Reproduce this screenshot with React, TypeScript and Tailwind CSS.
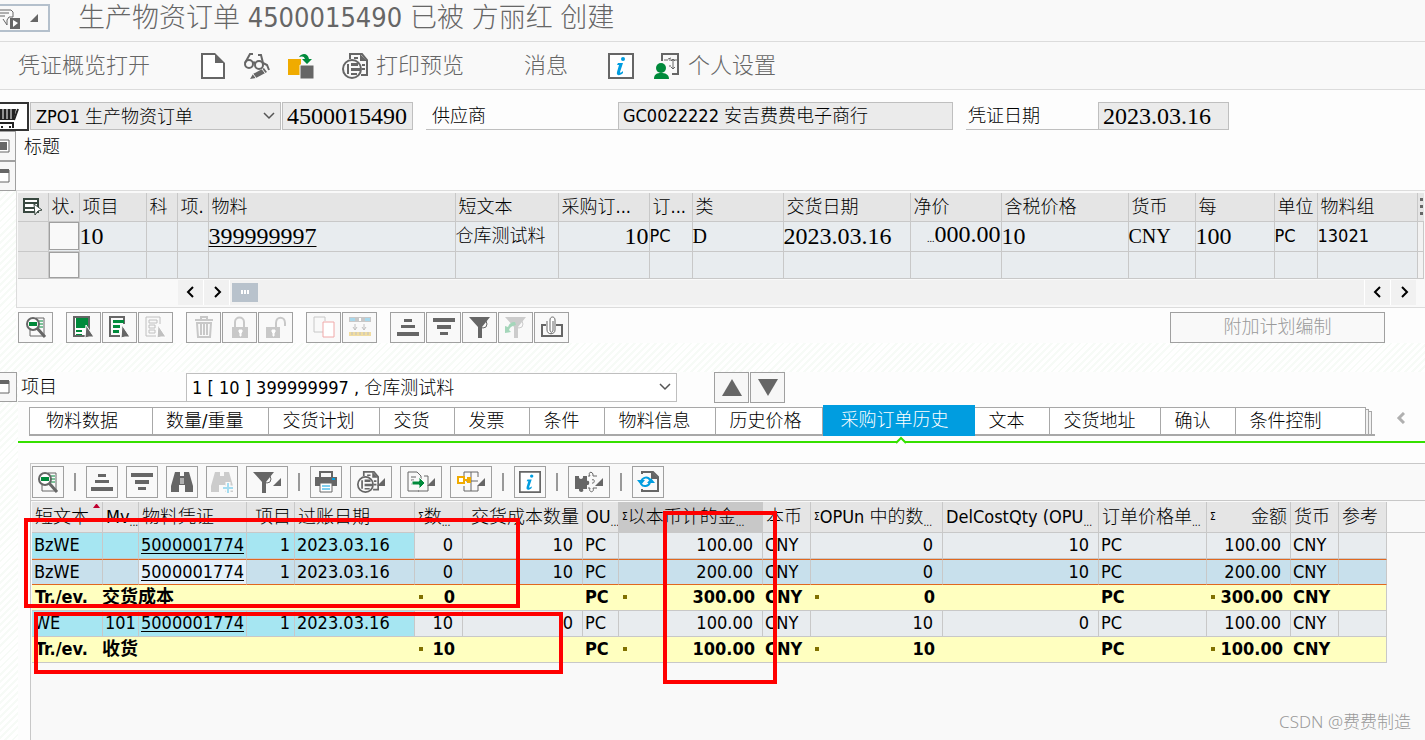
import { useState } from "react"
import type { ReactNode } from "react"
import clsx from "clsx"

const G = "#666666"

interface IconProps {
    size?: number;
    children: ReactNode;
}

const Svg = ({ size = 22, children }: IconProps) => (
    <svg width={size} height={size} viewBox={`0 0 ${size} ${size}`} fill="none" className="shrink-0" aria-hidden="true">
        {children}
    </svg>
)

/* ---------- Application toolbar icons, 26px grid ---------- */

const NewDoc = () => (
    <Svg size={26}>
        <path d="M2 1h14l8 8v16H2z" fill="#fff" />
        <path d="M15 1H2v24h22V10" stroke={G} strokeWidth="2" />
        <path d="M15 0l10 10H15z" fill={G} />
    </Svg>
)

const GlassesPencil = () => (
    <Svg size={26}>
        <g stroke={G} strokeWidth="2">
            <circle cx="5" cy="11" r="4" />
            <circle cx="15" cy="12" r="4" />
            <path d="M9 10c1-1 2-1 2 1M1 10L6 1h3M19 10L17 2h-3M19 10l4 2 2 5" />
        </g>
        <path d="M20 15l3 4-11 6-6 1 3-5z" fill={G} />
        <path d="M9 21l3 4M18 16l3 4" stroke="#f9f9f9" />
    </Svg>
)

const OtherDoc = () => (
    <Svg size={26}>
        <path d="M0 6h13v16H0z" fill="#f0ab00" />
        <path d="M12 12h14v14H12z" fill={G} stroke="#f9f9f9" />
        <path d="M11 4c4-5 9-3 10 2h3l-5 5-5-5h3c-1-3-3-3-6-2z" fill="#008a3b" />
    </Svg>
)

const PreviewShape = () => (
    <>
        <path d="M8 6V1h12l5 6v15h-6" stroke={G} strokeWidth="2" />
        <path d="M18 1v7h7z" fill={G} />
        <path d="M12 5h4M20 12h3M20 16h3" stroke={G} strokeWidth="2" />
        <circle cx="10" cy="16" r="9" fill="#f9f9f9" stroke={G} strokeWidth="2" />
        <path d="M5 11h2v10H5zM9 10h7v3H9zM9 15h10v3H9zM9 20h6v2H9z" fill={G} />
    </>
)

const InfoShape = () => (
    <>
        <path d="M1 1h24v24H1z" fill="#fff" stroke={G} strokeWidth="2" />
        <circle cx="15" cy="6" r="2" fill="#009de0" />
        <path d="M10 10h5l-3 9c0 1 1 1 3-1v2c-3 3-7 3-6-1l2-7H9z" fill="#009de0" />
    </>
)

const PersonSettings = () => (
    <Svg size={26}>
        <path d="M8 8V1h16v20h-6" stroke={G} strokeWidth="2" />
        <path d="M10 7h4M14 6l3-1M19 6v10M17 8l2-2 2 2M17 14l2 2 2-2M15 7h8M15 13h2" stroke={G} />
        <circle cx="7" cy="15" r="5" fill="#008a3b" />
        <path d="M0 26c0-5 3-6 7-6s8 1 8 6z" fill="#008a3b" />
    </Svg>
)

/* ---------- Small toolbar icons, 22px grid ---------- */

const Detail = () => (
    <Svg>
        <path d="M11 2h8v18H5v-6" stroke={G} />
        <path d="M14 5h4M14 8h4M14 11h4" stroke="#008a3b" strokeWidth="1" />
        <circle cx="8" cy="8" r="6" fill="#fff" stroke={G} strokeWidth="2" />
        <path d="M4 6h8v4H4z" fill="#008a3b" />
        <path d="M12 12l8 9" stroke={G} strokeWidth="3" />
    </Svg>
)

const cursorPath = "M13 9l8 12h-5l-4 1z"

const SelectAll = () => (
    <Svg>
        <path d="M1 1h15v19H1z" stroke={G} strokeWidth="2" fill="#fff" />
        <path d="M3 2h12v10H3zM3 14h6v2H3zM3 18h6v1H3z" fill="#008a3b" />
        <path d={cursorPath} fill={G} stroke="#fff" />
    </Svg>
)

const SelectBlock = () => (
    <Svg>
        <path d="M15 8V1H1v19h10" stroke={G} strokeWidth="2" />
        <path d="M4 4h11v3H4zM4 9h7v3H4zM4 14h6v3H4z" fill="#008a3b" />
        <path d={cursorPath} fill={G} stroke="#fff" />
    </Svg>
)

const Deselect = () => (
    <Svg>
        <path d="M15 8V1H1v19h10M4 4h8v3H4zM4 9h6v3H4zM4 14h6v3H4z" stroke="#c0c0c0" strokeWidth="1" />
        <path d={cursorPath} fill="#c0c0c0" stroke="#fff" />
    </Svg>
)

const Trash = () => (
    <Svg>
        <path d="M2 4h18M8 3V1h6v2M4 7l1 14h12l1-14zM8 8v11M11 8v11M14 8v11" stroke="#c8c8c8" strokeWidth="2" />
    </Svg>
)

const Lock = ({ open = false }: { open?: boolean }) => (
    <Svg>
        {open
            ? <path d="M11 11V7c0-7 9-7 9 0v3" stroke="#c8c8c8" strokeWidth="2" />
            : <path d="M6 11V6c0-6 9-6 9 0v5" stroke="#c8c8c8" strokeWidth="2" />}
        <path d={open ? "M1 11h14v11H1z" : "M3 11h16v11H3z"} fill="#c8c8c8" />
        <path d={open ? "M7 14h3v2l-1 1v3H8v-3l-1-1z" : "M10 14h3v2l-1 1v3h-1v-3l-1-1z"} fill="#fff" stroke="#fff" />
    </Svg>
)

const CopyIcon = () => (
    <Svg>
        <path d="M10 16H1V1h11v4" stroke="#c8c8c8" />
        <path d="M10 6h11v15H10z" stroke="#f0a8a8" strokeWidth="1" fill="#fff" />
    </Svg>
)

const Split = () => (
    <Svg>
        <path d="M0 1h22v5H0z" fill="#c8c8c8" />
        <path d="M1 2h5v3H1zM16 2h5v3h-5z" fill="#a8d8ec" />
        <path d="M10 2h2v3h-2z" fill="#fff" />
        <path d="M6 8v6M4 11l2 3 2-3M15 8v6M13 11l2 3 2-3" stroke="#c0c0c0" />
        <path d="M0 16h22v4H0z" fill="#f0dca0" />
        <path d="M3 16v3M7 16v3M11 16v3M15 16v3M19 16v3" stroke="#c0c0c0" />
    </Svg>
)

const SortAsc = () => (
    <Svg>
        <path d="M7 3h8v3H7zM4 9h14v3H4zM0 16h22v4H0z" fill={G} />
    </Svg>
)

const SortDesc = () => (
    <Svg>
        <path d="M0 2h22v4H0zM4 9h14v4H4zM7 16h8v3H7z" fill={G} />
    </Svg>
)

const Filter = ({ off = false }: { off?: boolean }) => (
    <Svg>
        <circle cx="14" cy="8" r="4" stroke={off ? "#cccccc" : G} />
        <path d="M0 1h21l-8 10v11H9V11z" fill={off ? "#cccccc" : G} />
        {off && <path d="M10 6c-4 0-6 2-7 5L0 10v7l6-1-2-2c1-3 3-4 7-5z" fill="#a4d6ba" />}
    </Svg>
)

const Attach = () => (
    <Svg>
        <path d="M5 9H1v11h20V9h-6" stroke={G} strokeWidth="2" />
        <path d="M12 5v9c0 3-3 3-3 0V4c0-4 5-4 5 0v10c0 5-8 5-8 0V5" fill="#fff" stroke={G} />
    </Svg>
)

const binoculars = "M4 1h5v4h4V1h5l4 14v6h-8v-7h-6v7H0v-6z"

const Find = () => (
    <Svg>
        <path d={binoculars} fill={G} />
        <path d="M10 7v6M12 7v6" stroke="#f9f9f9" />
    </Svg>
)

const FindNext = () => (
    <Svg>
        <path d={binoculars} fill="#cccccc" />
        <path d="M17 11v11M12 17h10" stroke="#f9f9f9" strokeWidth="5" />
        <path d="M17 12v10M12 17h10" stroke="#a4dcf0" strokeWidth="2" />
    </Svg>
)

const Printer = () => (
    <Svg>
        <path d="M5 6V1h12v5" stroke={G} strokeWidth="2" />
        <path d="M0 6h22v9H0z" fill={G} />
        <path d="M5 12h12v9H5z" fill="#fff" stroke={G} />
        <path d="M17 8h3" stroke="#009de0" strokeWidth="2" />
        <path d="M7 15h8M7 18h8" stroke="#009de0" strokeWidth="1" />
    </Svg>
)

const Export = () => (
    <Svg>
        <path d="M12 20H1V1h9l4 4v3M4 6h5M4 9h3M4 13h2M17 5h4v15H11" stroke={G} />
        <path d="M5 10h7V6l6 6-6 6v-4H5z" fill="#008a3b" stroke="#f9f9f9" />
    </Svg>
)

const Layout = () => (
    <Svg>
        <path d="M7 5V1h14v5M7 15v5h14v-5M14 1v19M9 10h12" stroke={G} />
        <path d="M1 6h6v6H1zM7 9h4" stroke="#f0ab00" strokeWidth="2" fill="#fff" />
        <path d="M10 6h4v6h-4z" fill="#f0ab00" />
    </Svg>
)

const Puzzle = () => (
    <Svg>
        <path d="M0 5h4c-1 4 5 4 4 0h4v5c3-2 3 5 0 4v4H8c2 4-5 4-4 0H0z" fill={G} />
        <path d="M13 5h2c-3-5 4-5 3 0h4M22 17h-4c2 5-5 5-3 0h-2M17 9c3-2 3 4 0 3" stroke={G} />
    </Svg>
)

const Refresh = () => (
    <Svg>
        <path d="M5 3V1h11l5 5v14H5v-2" stroke={G} strokeWidth="2" />
        <path d="M14 0l8 8h-8z" fill={G} />
        <path d="M4 11c1-5 7-6 9-2M13 11c-1 5-7 5-9 2" stroke="#009de0" strokeWidth="2" />
        <path d="M0 9h8l-4 5zM10 12l4-5 4 5z" fill="#009de0" />
    </Svg>
)

/* Corner marker of buttons that open a menu */
const MenuCorner = () => (
    <svg width="8" height="8" viewBox="0 0 8 8" className="shrink-0" aria-hidden="true">
        <path d="M8 0v8H0z" fill={G} />
    </svg>
)

const Chevron = ({ dir }: { dir: "left" | "right" | "down" }) => (
    <svg width="12" height="12" viewBox="0 0 12 12" fill="none" aria-hidden="true">
        <path
            d={dir === "left" ? "M8 1L3 6l5 5" : dir === "right" ? "M4 1l5 5-5 5" : "M1 3l5 5 5-5"}
            stroke={dir === "down" ? "#555555" : "#000000"}
            strokeWidth={dir === "down" ? 1.5 : 2}
        />
    </svg>
)

interface ToolProps {
    label: string;
    icon: ReactNode;
    menu?: boolean;
}

const itemTools: ToolProps[][] = [
    [{ label: "明细", icon: <Detail /> }],
    [
        { label: "全选", icon: <SelectAll /> },
        { label: "选择块", icon: <SelectBlock /> },
        { label: "取消选择", icon: <Deselect /> },
    ],
    [
        { label: "删除", icon: <Trash /> },
        { label: "锁定", icon: <Lock /> },
        { label: "解锁", icon: <Lock open /> },
    ],
    [
        { label: "复制", icon: <CopyIcon /> },
        { label: "拆分", icon: <Split /> },
    ],
    [
        { label: "升序", icon: <SortAsc /> },
        { label: "降序", icon: <SortDesc /> },
        { label: "过滤", icon: <Filter /> },
        { label: "删除过滤", icon: <Filter off /> },
        { label: "附件", icon: <Attach /> },
    ],
]

const historyTools: ToolProps[][] = [
    [{ label: "明细", icon: <Detail /> }],
    [
        { label: "升序", icon: <SortAsc /> },
        { label: "降序", icon: <SortDesc /> },
        { label: "查找", icon: <Find /> },
        { label: "继续查找", icon: <FindNext /> },
        { label: "过滤", icon: <Filter />, menu: true },
    ],
    [
        { label: "打印", icon: <Printer /> },
        { label: "打印预览", icon: <svg width="22" height="22" viewBox="0 0 26 26" fill="none" className="shrink-0"><PreviewShape /></svg>, menu: true },
        { label: "导出", icon: <Export />, menu: true },
        { label: "布局", icon: <Layout />, menu: true },
    ],
    [{ label: "信息", icon: <svg width="22" height="22" viewBox="0 0 26 26" fill="none" className="shrink-0"><InfoShape /></svg> }],
    [{ label: "扩展", icon: <Puzzle />, menu: true }],
    [{ label: "刷新", icon: <Refresh /> }],
]

const itemCols = [
    { title: "状.", w: "w-[31px]" },
    { title: "项目", w: "w-[67px]" },
    { title: "科", w: "w-[31px]" },
    { title: "项.", w: "w-[31px]" },
    { title: "物料", w: "w-[247px]" },
    { title: "短文本", w: "w-[103px]" },
    { title: "采购订...", w: "w-[91px]" },
    { title: "订...", w: "w-[43px]" },
    { title: "类", w: "w-[91px]" },
    { title: "交货日期", w: "w-[127px]" },
    { title: "净价", w: "w-[91px]" },
    { title: "含税价格", w: "w-[127px]" },
    { title: "货币", w: "w-[67px]" },
    { title: "每", w: "w-[79px]" },
    { title: "单位", w: "w-[43px]" },
    { title: "物料组", w: "w-[100px]" },
]

const tabs = [
    { title: "物料数据", pad: "border-l pl-4 pr-[34px]" },
    { title: "数量/重量", pad: "pl-[13px] pr-[25px]" },
    { title: "交货计划", pad: "pl-[13px] pr-[25px]" },
    { title: "交货", pad: "pl-[13px] pr-[25px]" },
    { title: "发票", pad: "pl-[13px] pr-[25px]" },
    { title: "条件", pad: "pl-[13px] pr-[25px]" },
    { title: "物料信息", pad: "pl-[13px] pr-[25px]" },
    { title: "历史价格", pad: "pl-[13px] pr-[21px]" },
    { title: "采购订单历史", pad: "pl-[17px] pr-[27px]" },
    { title: "文本", pad: "pl-[13px] pr-[25px]" },
    { title: "交货地址", pad: "pl-[13px] pr-[25px]" },
    { title: "确认", pad: "pl-[13px] pr-[25px]" },
    { title: "条件控制", pad: "pl-[13px] pr-11" },
]

const historyCols = [
    { title: "短文本", w: "w-[71px]", sorted: true },
    { title: "Mv", w: "w-9", cut: true },
    { title: "物料凭证", w: "w-[108px]" },
    { title: "项目", w: "w-12", right: true },
    { title: "过账日期", w: "w-[120px]" },
    { title: "数", w: "w-12", sum: true, cut: true },
    { title: "交货成本数量", w: "w-[120px]", right: true },
    { title: "OU", w: "w-9", cut: true },
    { title: "以本币计的金", w: "w-36", sum: true, cut: true, active: true },
    { title: "本币", w: "w-12" },
    { title: "OPUn 中的数", w: "w-[132px]", sum: true, cut: true },
    { title: "DelCostQty (OPU", w: "w-[156px]", cut: true },
    { title: "订单价格单", w: "w-[108px]", cut: true },
    { title: "金额", w: "w-[84px]", sum: true, right: true },
    { title: "货币", w: "w-12" },
    { title: "参考", w: "w-12" },
]

const numeric = [5, 6, 8, 10, 11, 13]

const historyRows = [
    { cells: ["BzWE", "", "5000001774", "1", "2023.03.16", "0", "10", "PC", "100.00", "CNY", "0", "10", "PC", "100.00", "CNY", ""] },
    { cells: ["BzWE", "", "5000001774", "1", "2023.03.16", "0", "10", "PC", "200.00", "CNY", "0", "10", "PC", "200.00", "CNY", ""], selected: true },
    { total: "交货成本", cells: ["0", "", "PC", "300.00", "CNY", "0", "", "PC", "300.00", "CNY", ""] },
    { cells: ["WE", "101", "5000001774", "1", "2023.03.16", "10", "0", "PC", "100.00", "CNY", "10", "0", "PC", "100.00", "CNY", ""] },
    { total: "收货", cells: ["10", "", "PC", "100.00", "CNY", "10", "", "PC", "100.00", "CNY", ""] },
]

const serifNum = "font-['Liberation_Serif','Noto_Sans_CJK_SC',serif] text-2xl leading-6"
const stripes = "bg-[repeating-linear-gradient(135deg,#ffffff_0px,#ffffff_3px,#f7fbf7_3px,#f7fbf7_5px)]"

const SideButton = ({ label, filled = false }: { label: string; filled?: boolean }) => (
    <button aria-label={label} className="flex h-[30px] w-full items-center border border-l-0 border-[#a0a0a0] bg-[#f7f7f7]">
        <svg width="10" height="14" viewBox="0 0 10 14" fill="none" aria-hidden="true">
            <path d="M0 1h9v12H0" stroke={G} strokeWidth="1" fill="#fff" />
            {filled ? <path d="M0 3h7v8H0z" fill={G} /> : <path d="M0 0h9v4H0z" fill={G} />}
        </svg>
    </button>
)

const TitleBar = () => (
    <header className="flex h-[42px] items-start border-b border-[#dcdcdc] bg-[#f9f9f9]">
        <button aria-label="菜单" className="mt-1 flex h-7 w-[50px] items-center gap-[10px] border-2 border-l-0 border-[#b4c0cc] bg-[#f9f9f9]">
            <svg width="20" height="22" viewBox="0 0 20 22" fill="none" aria-hidden="true">
                <path d="M0 3h11l2 2v5H9l-2 3v5l-4-6M0 6h9M0 9h5" stroke={G} strokeWidth="1" />
                <path d="M10 11h10v11H10z" fill={G} />
                <path d="M13 13l5 3-5 4z" fill="#fff" />
            </svg>
            <MenuCorner />
        </button>
        <h1 className="ml-7 text-[27px] leading-9 font-light whitespace-pre text-[#666666]">生产物资订单 4500015490 已被 方丽红 创建</h1>
    </header>
)

const AppToolbar = () => (
    <nav className="flex h-12 items-center border-b border-[#dcdcdc] bg-[#f9f9f9] pl-[18px] text-[22px] whitespace-nowrap text-[#666666]">
        <button>凭证概览打开</button>
        <button aria-label="创建" className="ml-[50px]"><NewDoc /></button>
        <button aria-label="显示/更改" className="ml-[18px]"><GlassesPencil /></button>
        <button aria-label="其他采购订单" className="ml-[18px]"><OtherDoc /></button>
        <button className="ml-7 flex items-center gap-2"><Svg size={26}><PreviewShape /></Svg>打印预览</button>
        <button className="ml-[60px]">消息</button>
        <button aria-label="帮助" className="ml-10"><Svg size={26}><InfoShape /></Svg></button>
        <button className="ml-5 flex items-center gap-2"><PersonSettings />个人设置</button>
    </nav>
)

const HeaderForm = () => (
    <div className="flex bg-[#fdfdfd] pt-3 text-lg">
        <button aria-label="购物车" className="flex h-[29px] w-[29px] items-center border-2 border-l-0 border-[#333333] bg-white">
            <svg width="20" height="22" viewBox="0 0 20 22" fill="none" aria-hidden="true">
                <path d="M0 3h16l-2 11H0" fill="#222222" />
                <path d="M3 3v10M7 3v10M11 3v10" stroke="#fff" />
                <path d="M14 14l4-11M0 17h13v5M2 20v2M10 20v2" stroke="#222222" strokeWidth="2" />
            </svg>
        </button>
        <div className="relative ml-px h-7 w-[251px]">
            <select aria-label="订单类型" className="size-full appearance-none border border-[#bfbfbf] bg-[#ebebeb] pl-[5px]">
                <option>ZPO1 生产物资订单</option>
            </select>
            <span className="pointer-events-none absolute top-2 right-1.5"><Chevron dir="down" /></span>
        </div>
        <input aria-label="订单号" readOnly defaultValue="4500015490" className={clsx("ml-px h-7 w-[131px] border border-[#bfbfbf] bg-[#ebebeb] pl-1", serifNum)} />
        <label htmlFor="vendor" className="ml-[13px] h-7 w-48 border-b border-[#bfbfbf] pl-1.5 leading-7">供应商</label>
        <input id="vendor" readOnly defaultValue="GC0022222 安吉费费电子商行" className="h-7 w-[335px] border border-[#bfbfbf] bg-[#ebebeb] pl-1" />
        <label htmlFor="docDate" className="ml-[13px] h-7 w-[132px] border-b border-[#bfbfbf] pl-0.5 leading-7">凭证日期</label>
        <input id="docDate" readOnly defaultValue="2023.03.16" className={clsx("h-7 w-[131px] border border-[#bfbfbf] bg-[#ebebeb] pl-1", serifNum)} />
    </div>
)

const ItemTable = () => (
    <div className="border-y border-l border-[#dcdcdc] bg-[#f9f9f9] px-px py-0.5">
        <table className="w-full table-fixed border-collapse text-left text-lg whitespace-nowrap">
            <thead>
                <tr className="h-7 bg-[#e5e5e5]">
                    <th className="w-[30px] border-r border-b border-[#c8c8c8] p-0">
                        <svg width="20" height="18" viewBox="0 0 20 18" fill="none" className="mx-auto" aria-label="表设置">
                            <path d="M1 1h14v13H1zM1 5h14M1 10h14" stroke="#384840" strokeWidth="2" fill="#fff" />
                            <path d="M11 6l8 6-4 1-3 4z" fill="#fff" stroke="#384840" />
                        </svg>
                    </th>
                    {itemCols.map((col) => (
                        <th key={col.w + col.title} className={clsx("border-r border-b border-[#c8c8c8] p-0 pl-[3px] leading-6 font-light", col.w)}>{col.title}</th>
                    ))}
                    <th className="border-b border-[#c8c8c8] p-0 pl-0.5">
                        <svg width="3" height="18" viewBox="0 0 3 18" aria-label="更多列">
                            <path d="M0 0h3v3H0zM0 7h3v3H0zM0 14h3v3H0z" fill={G} />
                        </svg>
                    </th>
                </tr>
            </thead>
            <tbody className="bg-[#e8ecef] [&_td]:border-r [&_td]:border-b [&_td]:border-[#c8c8c8] [&_td]:p-0">
                <tr className="h-[29px]">
                    <td className="bg-[#e5e5e5]" />
                    <td><button aria-label="选择行 10" className="block h-7 w-full border border-[#a0a0a0] bg-[#f9f9f9]" /></td>
                    <td className={serifNum}>10</td>
                    <td />
                    <td />
                    <td className={serifNum}><a href="#material" className="underline decoration-1 underline-offset-2">399999997</a></td>
                    <td>仓库测试料</td>
                    <td className={clsx("text-right", serifNum)}>10</td>
                    <td className="leading-6">PC</td>
                    <td className="font-['Liberation_Serif',serif] text-xl leading-6">D</td>
                    <td className={serifNum}>2023.03.16</td>
                    <td className={clsx("text-right", serifNum)}><span className="text-[10px]">...</span>000.00</td>
                    <td className={serifNum}>10</td>
                    <td className="font-['Liberation_Serif',serif] text-xl leading-6">CNY</td>
                    <td className={serifNum}>100</td>
                    <td className="leading-6">PC</td>
                    <td className="leading-6">13021</td>
                    <td className="bg-[#f2f2f2]" />
                </tr>
                <tr className="h-[27px]">
                    <td className="bg-[#e5e5e5]" />
                    <td><button aria-label="选择空行" className="block h-[26px] w-full border border-[#a0a0a0] bg-[#f9f9f9]" /></td>
                    {itemCols.slice(1).map((col) => <td key={col.w + col.title} />)}
                    <td className="bg-[#f2f2f2]" />
                </tr>
            </tbody>
        </table>
        <div className="mt-px mr-2 ml-40 flex h-[25px] items-stretch bg-[#f1f1f1]">
            <button aria-label="向左" className="flex w-[26px] items-center justify-center border-r border-white"><Chevron dir="left" /></button>
            <button aria-label="向右" className="flex w-[26px] items-center justify-center border-r border-white"><Chevron dir="right" /></button>
            <div className="my-[3px] ml-0.5 flex w-[26px] items-center justify-center gap-px bg-[#b8c2cc]">
                <i className="h-1 w-0.5 bg-white" />
                <i className="h-1 w-0.5 bg-white" />
                <i className="h-1 w-0.5 bg-white" />
            </div>
            <button aria-label="向左滚动" className="ml-auto flex w-[26px] items-center justify-center border-l border-white"><Chevron dir="left" /></button>
            <button aria-label="向右滚动" className="flex w-[26px] items-center justify-center border-l border-white"><Chevron dir="right" /></button>
        </div>
    </div>
)

const ItemToolbar = () => (
    <div className="flex gap-[13px] pt-1 pl-0.5">
        {itemTools.map((group, i) => (
            <div key={i} className="flex gap-px">
                {group.map((tool) => (
                    <button key={tool.label} aria-label={tool.label} className="flex h-[31px] w-[35px] items-center justify-center border border-[#a0a0a0] bg-[#f9f9f9]">
                        {tool.icon}
                    </button>
                ))}
            </div>
        ))}
        <button disabled className="mr-10 ml-auto h-[31px] w-[215px] border border-[#a0a0a0] bg-[#f9f9f9] text-lg text-[#999999]">附加计划编制</button>
    </div>
)

const ItemPicker = () => (
    <div className="flex h-[31px] items-center text-lg">
        <label htmlFor="item" className="h-[29px] w-[168px] border-b border-[#bfbfbf] pl-[3px] leading-7">项目</label>
        <div className="relative h-[29px] w-[491px]">
            <select id="item" className="size-full appearance-none border border-[#bfbfbf] bg-white pl-[5px]">
                <option>1 [ 10 ] 399999997 , 仓库测试料</option>
            </select>
            <span className="pointer-events-none absolute top-2 right-1.5"><Chevron dir="down" /></span>
        </div>
        <button aria-label="上一项" className="ml-[37px] flex h-[31px] w-[35px] items-center justify-center border border-[#a0a0a0] bg-[#f7f7f7]">
            <svg width="20" height="17" viewBox="0 0 20 17"><path d="M10 0l10 17H0z" fill={G} /></svg>
        </button>
        <button aria-label="下一项" className="ml-px flex h-[31px] w-[35px] items-center justify-center border border-[#a0a0a0] bg-[#f7f7f7]">
            <svg width="20" height="17" viewBox="0 0 20 17"><path d="M0 0h20L10 17z" fill={G} /></svg>
        </button>
    </div>
)

const TabStrip = () => {
    const [current, setCurrent] = useState("采购订单历史");

    return (
        <div className="border-b-2 border-[#35e000] pt-0.5 pb-[5px]">
            <div role="tablist" className="flex h-[31px] items-end pl-[11px] text-lg whitespace-nowrap">
                {tabs.map((tab) => {
                    const active = tab.title === current
                    return (
                        <button
                            key={tab.title}
                            role="tab"
                            aria-selected={active}
                            onClick={() => setCurrent(tab.title)}
                            className={clsx(
                                "relative text-left leading-6",
                                tab.pad,
                                active
                                    ? "h-[31px] bg-[#009de0] text-white"
                                    : "h-[29px] border-t border-r border-b-2 border-[#a8a8a8] bg-white",
                            )}
                        >
                            {tab.title}
                            {active && (
                                <svg width="10" height="8" viewBox="0 0 10 8" fill="none" className="absolute top-full left-1/2 -ml-[3px]">
                                    <path d="M0 7l5-5 5 5" fill="#fdfdfd" stroke="#35e000" strokeWidth="2" />
                                </svg>
                            )}
                        </button>
                    )
                })}
                <i className="h-[27px] w-[3px] border-t border-r border-b-2 border-[#a8a8a8] bg-[#f2f2f2]" />
                <i className="h-[25px] w-[3px] border-t border-r border-b-2 border-[#a8a8a8] bg-[#f2f2f2]" />
                <i className="h-0.5 w-[3px] bg-[#a8a8a8]" />
                <button aria-label="更多页签" className="mr-5 ml-auto flex h-[31px] items-center pb-1">
                    <svg width="9" height="12" viewBox="0 0 9 12" fill="none"><path d="M8 1L3 6l5 5" stroke="#b0b0b0" strokeWidth="3" /></svg>
                </button>
            </div>
        </div>
    )
}

const HistoryToolbar = () => (
    <div className="flex h-[37px] items-center gap-2 border-b border-[#c8c8c8] pl-px">
        {historyTools.map((group, i) => (
            <div key={i} className="flex gap-2">
                {i > 0 && <span className="flex w-1.5 items-center justify-center"><i className="h-[18px] w-0.5 bg-[#999999]" /></span>}
                {group.map((tool) => (
                    <button
                        key={tool.label}
                        aria-label={tool.label}
                        className={clsx("flex h-8 items-center justify-center border border-[#a0a0a0] bg-[#f9f9f9]", tool.menu ? "w-[42px]" : "w-8")}
                    >
                        {tool.icon}
                        {tool.menu && <span className="-ml-0.5"><MenuCorner /></span>}
                    </button>
                ))}
            </div>
        ))}
    </div>
)

const HistoryTable = () => (
    <table className="w-full table-fixed border-separate border-spacing-0 text-left text-lg leading-6 whitespace-nowrap">
        <thead>
            <tr className="h-[31px]">
                {historyCols.map((col) => (
                    <th
                        key={col.title + col.w}
                        className={clsx(
                            "relative overflow-hidden border-r border-b border-[#c8c8c8] px-[3px] py-0 font-light",
                            col.w,
                            col.right && "text-right",
                            col.active ? "bg-[#c8c8c8]" : "bg-[#e5e5e5]",
                        )}
                    >
                        <div className={clsx("flex", col.sum && col.right ? "justify-between" : col.right && "justify-end")}>
                            {col.sum && <span className="self-center text-[10px] leading-3">Σ</span>}
                            <span>{col.title}</span>
                            {col.cut && <span className="self-end text-[10px] leading-3">...</span>}
                        </div>
                        {col.sorted && (
                            <svg width="7" height="4" viewBox="0 0 7 4" className="absolute top-0.5 right-0.5"><path d="M3 0h1l3 4H0z" fill="#c00030" /></svg>
                        )}
                    </th>
                ))}
                <th className="border-b border-[#c8c8c8]" />
            </tr>
        </thead>
        <tbody>
            {historyRows.map((row, r) => (
                <tr key={r} className={clsx("h-[26px]", row.total && "font-bold")}>
                    {row.total && (
                        <td colSpan={5} className="border-b border-[#c8c8c8] bg-[#ffffc0] p-0 pl-[3px]">
                            <div className="flex">
                                <span className="w-[67px]">Tr./ev.</span>
                                <span>{row.total}</span>
                            </div>
                        </td>
                    )}
                    {row.cells.map((cell, c) => {
                        const index = row.total ? c + 5 : c
                        const isNumber = numeric.includes(index)
                        const summed = row.total && isNumber && cell !== ""
                        return (
                            <td
                                key={index}
                                className={clsx(
                                    "p-0",
                                    row.total && index !== 15 ? "border-r-0" : "border-r border-r-[#c8c8c8]",
                                    row.selected ? "border-y border-y-[#e06820]" : "border-b border-b-[#c8c8c8]",
                                    row.total ? "bg-[#ffffc0]"
                                        : row.selected ? (index === 2 ? "bg-[#e5f1fb]" : "bg-[#c8e0ec]")
                                            : index < 5 ? "bg-[#a6e6f2]" : "bg-[#e8ecef]",
                                    isNumber ? (row.total ? "pr-2 text-right" : "pr-[9px] text-right") : index === 3 ? "pr-1 text-right" : "pl-0.5",
                                )}
                            >
                                {index === 2
                                    ? <a href="#document" className="underline decoration-1 underline-offset-2">{cell}</a>
                                    : summed
                                        ? <div className="flex items-center justify-between pl-1"><i className="size-1 bg-[#807000]" />{cell}</div>
                                        : cell}
                            </td>
                        )
                    })}
                </tr>
            ))}
        </tbody>
    </table>
)

/* Red frames drawn over the grid to point at the rows and the amount column */
const Marks = () => (
    <div className="pointer-events-none">
        <div className="absolute top-[17px] -left-[7px] h-[90px] w-[496px] border-4 border-[#ff0000]" />
        <div className="absolute top-[111px] left-[3px] h-[62px] w-[529px] border-4 border-[#ff0000]" />
        <div className="absolute top-[10px] left-[632px] h-[173px] w-[114px] border-4 border-[#ff0000]" />
    </div>
)

export default function App() {
    return (
        <div className="relative flex min-h-screen flex-col overflow-hidden bg-white font-['DejaVu_Sans_Condensed','Noto_Sans_CJK_SC',sans-serif] font-light text-black">
            <TitleBar />
            <AppToolbar />
            <HeaderForm />

            {/* Item overview */}
            <section className={clsx("flex", stripes)}>
                <aside className="w-4 shrink-0">
                    <SideButton label="抬头" filled />
                    <SideButton label="项目概览" />
                </aside>
                <div className="min-w-0 flex-1 bg-[#fdfdfd]">
                    <h2 className="h-[59px] pt-0.5 pl-2 text-lg font-light">标题</h2>
                    <ItemTable />
                    <ItemToolbar />
                </div>
            </section>

            <div className={clsx("h-[29px]", stripes)} />

            {/* Item detail */}
            <section className={clsx("flex flex-1", stripes)}>
                <aside className="w-[18px] shrink-0 pr-px">
                    <SideButton label="项目明细" />
                </aside>
                <div className="flex min-w-0 flex-1 flex-col bg-[#fdfdfd]">
                    <ItemPicker />
                    <TabStrip />
                    <div className="mt-5 ml-3 flex-1 border-t border-l border-[#c8c8c8] bg-[#f9f9f9]">
                        <HistoryToolbar />
                        <div className="relative pt-px pl-px">
                            <HistoryTable />
                            <Marks />
                        </div>
                    </div>
                </div>
            </section>

            <p className="absolute right-3.5 bottom-1.5 font-['Noto_Sans','Noto_Sans_CJK_SC',sans-serif] text-[17px] text-[#999999]">CSDN @费费制造</p>
        </div>
    )
}
